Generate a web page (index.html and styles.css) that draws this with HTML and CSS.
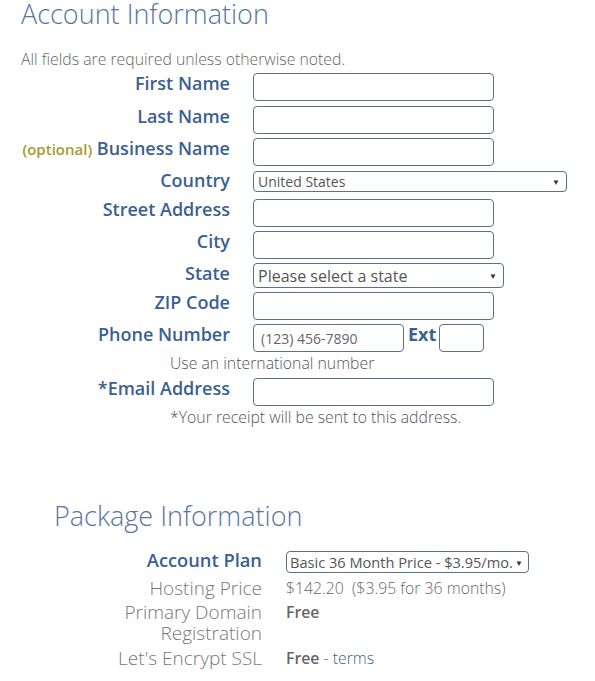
FILE: index.html
```html
<!DOCTYPE html>
<html>
<head>
<meta charset="utf-8">
<link rel="stylesheet" href="styles.css">
</head>
<body>
<div class="page">
  <h1 class="title">Account Information</h1>
  <p class="note">All fields are required unless otherwise noted.</p>

  <div class="form">
    <div class="row r1">
      <label class="lbl">First Name</label>
      <input class="inp" type="text">
    </div>
    <div class="row r2">
      <label class="lbl">Last Name</label>
      <input class="inp" type="text">
    </div>
    <div class="row r3">
      <label class="lbl"><span class="opt">(optional)</span> Business Name</label>
      <input class="inp" type="text">
    </div>
    <div class="row r4">
      <label class="lbl lbl-c">Country</label>
      <div class="sel sel-country"><span>United States</span><span class="arr">▼</span></div>
    </div>
    <div class="row r5">
      <label class="lbl">Street Address</label>
      <input class="inp" type="text">
    </div>
    <div class="row r6">
      <label class="lbl">City</label>
      <input class="inp" type="text">
    </div>
    <div class="row r7">
      <label class="lbl">State</label>
      <div class="sel sel-state"><span>Please select a state</span><span class="arr">▼</span></div>
    </div>
    <div class="row r8">
      <label class="lbl">ZIP Code</label>
      <input class="inp" type="text">
    </div>
    <div class="row r9">
      <label class="lbl">Phone Number</label>
      <input class="inp inp-phone" type="text" placeholder="(123) 456-7890">
      <span class="ext">Ext</span>
      <input class="inp inp-ext" type="text">
    </div>
    <p class="help help1">Use an international number</p>
    <div class="row r10">
      <label class="lbl">*Email Address</label>
      <input class="inp" type="text">
    </div>
    <p class="help help2">*Your receipt will be sent to this address.</p>
  </div>

  <h2 class="title title2">Package Information</h2>
  <div class="pkg">
    <div class="prow p1">
      <div class="plbl plbl-strong">Account Plan</div>
      <div class="sel sel-plan"><span>Basic 36 Month Price - $3.95/mo.</span><span class="arr">▼</span></div>
    </div>
    <div class="prow p2">
      <div class="plbl">Hosting Price</div>
      <div class="pval">$142.20&nbsp; ($3.95 for 36 months)</div>
    </div>
    <div class="prow p3">
      <div class="plbl">Primary Domain<br>Registration</div>
      <div class="pval"><b>Free</b></div>
    </div>
    <div class="prow p4">
      <div class="plbl">Let's Encrypt SSL</div>
      <div class="pval"><b>Free</b> - <span class="terms">terms</span></div>
    </div>
  </div>
</div>
</body>
</html>
```

FILE: styles.css
```css
* { box-sizing: border-box; }
body {
  margin: 0;
  background: #ffffff;
  font-family: "Open Sans", "Noto Sans", sans-serif;
}
.page {
  padding: 0 0 0 21px;
  width: 595px;
}
.title {
  margin: 0;
  font-size: 27px;
  font-weight: 300;
  color: #5876a4;
  line-height: 28px;
  white-space: nowrap;
}
.note {
  margin: 21px 0 0 0;
  font-size: 15.8px;
  font-weight: 300;
  color: #666;
  line-height: 20px;
  white-space: nowrap;
}
.row {
  display: flex;
  align-items: flex-start;
}
.lbl {
  width: 209px;
  flex: none;
  text-align: right;
  font-size: 18px;
  font-weight: 600;
  color: #3c5f93;
  line-height: 24px;
  margin-top: -2px;
  margin-right: 23px;
  white-space: nowrap;
}
.lbl-c { margin-top: -3px; }
.opt {
  font-size: 15px;
  color: #a49b2e;
  font-weight: 600;
}
.inp {
  display: block;
  width: 241px;
  height: 28px;
  border: 1px solid #5b7187;
  border-radius: 4px;
  background: #fff;
  padding: 0 6px;
  font-family: "Open Sans", sans-serif;
  font-size: 14px;
  color: #555;
  outline: none;
}
.inp::placeholder { color: #666; }
.r1 { margin-top: 4px; }
.r2 { margin-top: 5px; }
.r3 { margin-top: 4px; }
.r4 { margin-top: 5px; }
.r5 { margin-top: 7px; }
.r6 { margin-top: 4px; }
.r7 { margin-top: 4px; }
.r8 { margin-top: 4px; }
.r9 { margin-top: 4px; }
.r10 { margin-top: 4px; }
.sel {
  display: flex;
  align-items: center;
  justify-content: space-between;
  border: 1px solid #5b7187;
  border-radius: 4px;
  background: #fff;
  color: #555;
  padding: 0 6px 0 4px;
  white-space: nowrap;
}
.arr {
  font-size: 8px;
  color: #333;
}
.sel-country {
  width: 314px;
  height: 21px;
  font-size: 14px;
}
.sel-state {
  width: 251px;
  height: 25px;
  font-size: 16px;
}
.inp-phone {
  width: 151px;
  padding-left: 7px;
}
.ext {
  font-size: 18px;
  font-weight: 700;
  color: #3c5f93;
  line-height: 24px;
  margin: -2px 3px 0 4px;
}
.inp-ext {
  width: 45px;
}
.help {
  margin: 0;
  padding-left: 149px;
  font-size: 15.8px;
  font-weight: 300;
  color: #555;
  line-height: 22px;
  white-space: nowrap;
}
.title2 {
  margin-top: 74px;
  margin-left: 33px;
}
.pkg {
  margin-top: 21px;
}
.prow {
  display: flex;
  align-items: flex-start;
}
.plbl {
  width: 241px;
  flex: none;
  text-align: right;
  font-size: 19px;
  font-weight: 300;
  color: #777;
  line-height: 21px;
  margin-right: 24px;
  white-space: nowrap;
}
.plbl-strong {
  font-size: 18.3px;
  font-weight: 600;
  color: #3c5f93;
  line-height: 24px;
  margin-top: -3px;
}
.sel-plan {
  width: 243px;
  height: 22px;
  font-size: 14.6px;
  padding: 0 5px 0 3px;
}
.pval {
  font-size: 15.8px;
  font-weight: 300;
  color: #666;
  line-height: 21px;
  white-space: nowrap;
}
.pval b {
  font-weight: 600;
  color: #666;
}
.terms { color: #3c5f93; }
.p2 { margin-top: 5px; }
.p3 { margin-top: 3px; }
.p4 { margin-top: 4px; }
```
